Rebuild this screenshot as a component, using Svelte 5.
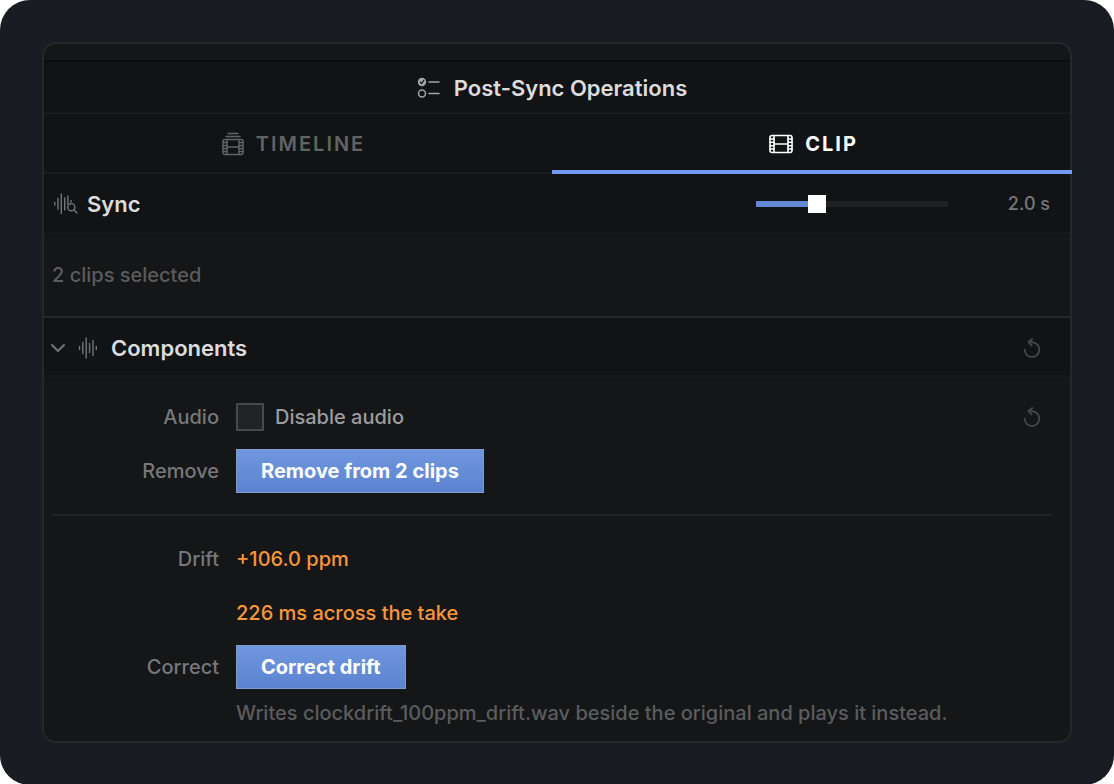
<script lang="ts">
  // Shortest and longest search window, in seconds
  const MIN = 0.5;
  const MAX = 5.5;

  let tab: 'timeline' | 'clip' = $state('clip');
  let seconds = $state(2);
  let expanded = $state(true);
  let disableAudio = $state(false);

  const clipCount = 2;
  const target = 'clockdrift_100ppm_drift.wav';

  let fill = $derived(((seconds - MIN) / (MAX - MIN)) * 100);

  function reset() {
    disableAudio = false;
  }
</script>

{#snippet resetIcon()}
  <svg width="20" height="22" viewBox="0 0 20 22" fill="none" stroke="currentColor" stroke-width="1.9" stroke-linecap="round" stroke-linejoin="round">
    <path d="M2.7 12.6A7.3 7.3 0 1 0 12 5.6Q10 4.6 7 5" />
    <path d="M10.2 2 6.5 5 9.6 8.4" />
  </svg>
{/snippet}

<main>
  <section class="panel">
    <div class="strip"></div>

    <header class="title">
      <svg width="24" height="22" viewBox="0 0 24 22" fill="none" stroke="currentColor" stroke-width="1.5" stroke-linecap="round">
        <circle cx="5" cy="5" r="4.2" fill="currentColor" stroke="none" />
        <path d="M3.3 5.2 4.6 6.6 6.8 3.4" stroke="#121315" stroke-width="1.2" />
        <circle cx="5" cy="16.5" r="3.5" />
        <path d="M12 5h10M12 16.5h10" />
      </svg>
      <h1>Post-Sync Operations</h1>
    </header>

    <div class="tabs">
      <div class="tab-list" role="tablist">
        <button class="tab" class:active={tab === 'timeline'} role="tab" aria-selected={tab === 'timeline'} onclick={() => (tab = 'timeline')}>
          <svg width="22" height="24" viewBox="0 0 22 24" fill="none" stroke="currentColor" stroke-width="1.4" stroke-linecap="round">
            <path d="M6 1.5h10M4 4.5h14" />
            <rect x="1" y="7.5" width="20" height="15" rx="2" />
            <path d="M5 7.5v15M17 7.5v15M5 15h12" />
            <path d="M1 10.5h4M1 13.5h4M1 16.5h4M1 19.5h4M17 10.5h4M17 13.5h4M17 16.5h4M17 19.5h4" />
          </svg>
          TIMELINE
        </button>
        <button class="tab" class:active={tab === 'clip'} role="tab" aria-selected={tab === 'clip'} onclick={() => (tab = 'clip')}>
          <svg width="24" height="20" viewBox="0 0 24 20" fill="none" stroke="currentColor" stroke-width="1.6" stroke-linecap="round">
            <rect x="1" y="1.5" width="22" height="17" rx="2" />
            <path d="M5 1.5v17M19 1.5v17M5 10h14" />
            <path d="M1 5h4M1 8.3h4M1 11.7h4M1 15h4M19 5h4M19 8.3h4M19 11.7h4M19 15h4" />
          </svg>
          CLIP
        </button>
      </div>
    </div>

    <div class="bar">
      <svg class="icon" width="24" height="22" viewBox="0 0 24 22" fill="none" stroke="currentColor" stroke-width="1.4" stroke-linecap="round">
        <path d="M.8 9.5v2.5M4 5.5v10.5M7.3 1v19.5M10.7 5v12M13.9 3v8M17 7.5v1.5" />
        <circle cx="17.3" cy="14.2" r="3.6" />
        <path d="M20 17l3 3" />
      </svg>
      <h2><label for="window">Sync</label></h2>
      <input id="window" class="slider" type="range" min={MIN} max={MAX} step="0.1" bind:value={seconds} style="--fill: {fill}%" />
      <output for="window">{seconds.toFixed(1)} s</output>
    </div>

    <p class="selection">{clipCount} clips selected</p>

    <div class="bar components">
      <button class="toggle" aria-expanded={expanded} onclick={() => (expanded = !expanded)}>
        <svg class="chevron" width="16" height="10" viewBox="0 0 16 10" fill="none" stroke="currentColor" stroke-width="2" stroke-linecap="round" stroke-linejoin="round">
          <path d="M2 2l6 6 6-6" />
        </svg>
        <svg class="icon" width="20" height="22" viewBox="0 0 20 22" fill="none" stroke="currentColor" stroke-width="1.4" stroke-linecap="round">
          <path d="M1.5 9.5v3M4.8 5.5v11M8.2 1v20M11.6 6.5v9M15 3.5v15M18.3 9.5v3" />
        </svg>
        <span>Components</span>
      </button>
      <button class="reset" aria-label="Reset components" onclick={reset}>{@render resetIcon()}</button>
    </div>

    {#if expanded}
      <div class="body">
        <div class="row">
          <span class="name">Audio</span>
          <label class="check">
            <input type="checkbox" bind:checked={disableAudio} />
            Disable audio
          </label>
          <button class="reset" aria-label="Reset audio" onclick={reset}>{@render resetIcon()}</button>
        </div>
        <div class="row">
          <span class="name">Remove</span>
          <button class="action">Remove from {clipCount} clips</button>
        </div>
        <hr />
        <div class="row">
          <span class="name">Drift</span>
          <span class="warn">+106.0 ppm</span>
        </div>
        <div class="row">
          <span class="name"></span>
          <span class="warn">226 ms across the take</span>
        </div>
        <div class="row">
          <span class="name">Correct</span>
          <button class="action">Correct drift</button>
        </div>
        <div class="row note">
          <span class="name"></span>
          <span>Writes {target} beside the original and plays it instead.</span>
        </div>
      </div>
    {/if}
  </section>
</main>

<style>
  :global(body) {
    margin: 0;
    background: #fff;
  }

  main {
    box-sizing: border-box;
    min-height: 100vh;
    padding: 42px;
    border-radius: 30px;
    background: #191c23;
    color: #77787a;
    font-family: Inter, 'Liberation Sans', sans-serif;
    font-size: 20px;
    font-weight: 500;
    line-height: 24px;
  }

  button {
    padding: 0;
    border: none;
    background: none;
    color: inherit;
    font: inherit;
    cursor: pointer;
  }

  svg {
    display: block;
    flex: none;
  }

  h1,
  h2,
  p {
    margin: 0;
  }

  h1,
  h2,
  .toggle {
    color: #dcdcde;
    font-size: 22px;
    font-weight: 600;
    line-height: 28px;
  }

  .panel {
    border: 2px solid #252729;
    border-radius: 14px;
    background: #151618;
  }

  .strip {
    height: 16px;
    border-bottom: 2px solid #0b0c0e;
  }

  .title {
    display: flex;
    align-items: center;
    justify-content: center;
    gap: 13px;
    box-sizing: border-box;
    height: 52px;
    padding: 2px 10px 0 0;
    border-bottom: 2px solid #191a1c;
    background: #121315;
    color: #a4a5a6;
  }

  .tabs {
    border-bottom: 2px solid #1b1c1e;
    background: #121315;
  }

  /* The underline runs over the panel's right edge */
  .tab-list {
    display: grid;
    grid-template-columns: 1fr 1fr;
    margin: 0 -2px -2px -12px;
  }

  .tab {
    display: flex;
    align-items: center;
    justify-content: center;
    gap: 12px;
    height: 60px;
    box-sizing: border-box;
    padding-left: 3px;
    border-top: 4px solid transparent;
    border-bottom: 4px solid transparent;
    color: #626365;
    font-weight: 600;
    letter-spacing: 2px;
  }

  .tab.active {
    border-bottom-color: #739bf2;
    color: #fff;
    font-weight: 700;
  }

  .bar {
    display: flex;
    align-items: center;
    box-sizing: border-box;
    height: 60px;
    padding: 2px 20px 0 10px;
    border-bottom: 2px solid #17181a;
    background: #121315;
  }

  .icon {
    color: #747577;
  }

  .bar h2 {
    flex: 1;
    margin-left: 9px;
  }

  .slider {
    appearance: none;
    width: 192px;
    height: 18px;
    margin: 0;
    background: none;
  }

  .slider::-webkit-slider-runnable-track {
    height: 6px;
    background: linear-gradient(to right, #6088d4 var(--fill), #202123 var(--fill));
  }

  .slider::-webkit-slider-thumb {
    appearance: none;
    width: 18px;
    height: 18px;
    margin-top: -6px;
    background: #fff;
  }

  output {
    width: 102px;
    font-size: 18px;
    text-align: right;
  }

  .selection {
    padding: 29px 8px;
    color: #5b5c5e;
  }

  .components {
    height: 61px;
    padding: 2px 28px 0 6px;
    border-top: 2px solid #242628;
  }

  .toggle {
    display: flex;
    flex: 1;
    align-items: center;
    text-align: left;
  }

  .chevron {
    color: #747577;
    margin-right: 12px;
  }

  .toggle span {
    margin-left: 13px;
  }

  .reset {
    margin-left: auto;
    color: #444547;
  }

  .body {
    padding: 13px 18px 9px 8px;
  }

  .row {
    display: flex;
    align-items: center;
    min-height: 54px;
  }

  .name {
    flex: none;
    width: 167px;
    margin-right: 17px;
    text-align: right;
  }

  .check {
    display: flex;
    align-items: center;
    gap: 11px;
    color: #9c9d9f;
  }

  .check input {
    appearance: none;
    box-sizing: border-box;
    width: 28px;
    height: 28px;
    margin: 0;
    border: 2px solid #47484b;
    background: #222326;
  }

  .check input:checked {
    background: #6088d4;
  }

  .row .reset {
    margin-right: 10px;
  }

  .action {
    height: 44px;
    padding: 0 24px;
    border: 1px solid #7d9bcb;
    background: linear-gradient(#7097de, #5b83d0);
    color: #fff;
    font-weight: 700;
  }

  hr {
    height: 2px;
    margin: 16px 0;
    border: none;
    background: #222325;
  }

  .warn {
    color: #f8973a;
  }

  .note {
    min-height: 38px;
    color: #5b5c5e;
  }
</style>
